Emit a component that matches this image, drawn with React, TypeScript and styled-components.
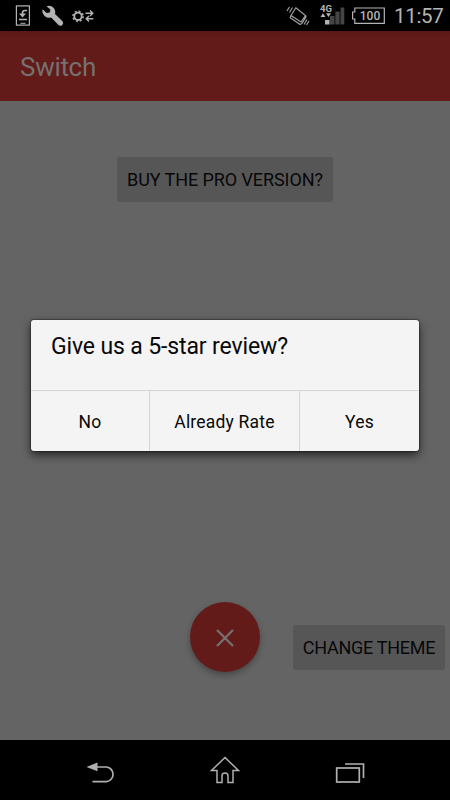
import React from "react";
import styled, { createGlobalStyle } from "styled-components";

const GlobalStyle = createGlobalStyle`
  * { box-sizing: border-box; }
  body { margin: 0; background: #000; font-family: Roboto, "Noto Sans", sans-serif; }
  button { font-family: inherit; border: 0; padding: 0; white-space: nowrap; }
  svg { display: block; flex: none; }
`;

const Screen = styled.div`
  position: relative;
  display: flex;
  flex-direction: column;
  width: 450px;
  height: 800px;
  overflow: hidden;
  background: #646464;
`;

const StatusBar = styled.header`
  flex: none;
  height: 31px;
  display: flex;
  justify-content: space-between;
  padding-right: 6px;
  background: #000;
  color: #b4b4b4;
`;

const Clock = styled.span`
  width: 50px;
  margin-left: 9px;
  font-size: 20.5px;
  line-height: 33px;
  letter-spacing: -0.3px;
  white-space: nowrap;
`;

const StatusGroup = styled.div`
  display: flex;
`;

const AppBar = styled.div`
  flex: none;
  height: 70px;
  padding: 1px 20px 0;
  display: flex;
  align-items: center;
  background: linear-gradient(#5a1816, #621b18 6px);
`;

const AppTitle = styled.h1`
  margin: 0;
  font-size: 26px;
  font-weight: 400;
  letter-spacing: -0.3px;
  color: #767170;
`;

const Content = styled.main`
  flex: 1;
  display: flex;
  flex-direction: column;
  justify-content: space-between;
  padding: 56px 5px 68px;
`;

const FlatButton = styled.button<{ $width: number; $tracking: number }>`
  width: ${(p) => p.$width}px;
  height: 45px;
  border-radius: 3px;
  background: #565656;
  color: #080808;
  font-size: 18px;
  letter-spacing: ${(p) => p.$tracking}px;
`;

const TopRow = styled.div`
  display: flex;
  justify-content: center;
`;

const BottomRow = styled.div`
  display: grid;
  grid-template-columns: 1fr 70px 1fr;
  align-items: end;
`;

const Fab = styled.button`
  grid-column: 2;
  width: 70px;
  height: 70px;
  padding-top: 1px;
  border-radius: 50%;
  display: flex;
  align-items: center;
  justify-content: center;
  background: #621b18;
  box-shadow: 0 3px 6px rgba(0, 0, 0, 0.3);
`;

const ThemeSlot = styled.div`
  justify-self: end;
  margin-bottom: 2px;
`;

const DialogLayer = styled.div`
  position: absolute;
  inset: 320px 31px auto;
`;

const Dialog = styled.section`
  height: 131px;
  display: flex;
  flex-direction: column;
  border-radius: 3px;
  overflow: hidden;
  background: #f4f4f4;
  color: #080808;
  box-shadow: 0 0 1px 1px rgba(0, 0, 0, 0.3), 0 4px 10px rgba(0, 0, 0, 0.65);
`;

const DialogTitle = styled.h2`
  flex: 1;
  margin: 0;
  padding: 12px 20px 0;
  font-size: 23px;
  line-height: 30px;
  font-weight: 400;
  letter-spacing: -0.13px;
`;

const Actions = styled.div`
  height: 61px;
  display: grid;
  grid-template-columns: 118px 150px 1fr;
  border-top: 1px solid #d6d6d6;
`;

const Action = styled.button`
  padding-top: 2px;
  background: none;
  color: #080808;
  font-size: 17.5px;
  letter-spacing: 0.2px;
  & + & { border-left: 1px solid #d6d6d6; }
`;

const NavBar = styled.nav`
  flex: none;
  height: 60px;
  background: #000;
  display: flex;
  justify-content: center;
`;

const LeftStatusIcons = () => (
  <svg width="110" height="31" viewBox="0 0 110 31" fill="none" stroke="#b4b4b4">
    <rect x="16.4" y="5.9" width="13" height="19.2" strokeWidth="1.2" />
    <path d="M20.500 23.300h5" strokeWidth="1" />
    <path d="M19 19.500h8M27 10.500h-2q-2.500 0-2.500 2.500v3" strokeWidth="1.6" />
    <path d="M19 13.500h7l-3.500 4z" fill="#b4b4b4" stroke="none" />
    <path
      fill="#b4b4b4"
      stroke="none"
      d="M46.500 6.200q4-1.500 7 1.500 2.500 2.800 1.500 6.300l7.500 7.200q1.500 2-.2 3.700t-3.800.2l-7.400-7.600q-3.600 1-6.500-1.600-3-3-2-6.600l4 3.700 3.200-.600.600-3z"
    />
    <circle cx="78" cy="16.300" r="3.700" strokeWidth="1.8" />
    <circle cx="78" cy="16.300" r="5.100" strokeWidth="1.5" strokeDasharray="2 2.006" />
    <path d="M85.500 13.200h7M90 10.500l2.800 2.700-2.800 2.700M93.300 18.700h-7M89 16l-2.800 2.700 2.800 2.700" strokeWidth="1.400" />
  </svg>
);

const VibrateIcon = () => (
  <svg width="24" height="31" viewBox="286 0 24 31" fill="none" stroke="#a0a0a0" strokeWidth="1.2">
    <path d="M295.800 7.800l9.700 7.700-4.500 6.500-10-6.500zM291 15.500l-.8 2.300 10 6.800 1.800-1.200 4-6.500-.5-1.400" />
    <path d="M287 11l2.500-4M289.500 12.500l3-5M304 24.500l3-5M306.500 25l2.500-4" strokeWidth="1.200" />
  </svg>
);

const NetworkLabel = styled.span`
  height: 9px;
  font-size: 9.5px;
  line-height: 9px;
  font-weight: 700;
  color: #b4b4b4;
`;

const Network = styled.div`
  width: 26px;
  margin: 4px 6px 0 10px;
  display: flex;
  flex-direction: column;
`;

const SignalHolder = styled.div`
  margin-top: -9px;
`;

const SignalIcon = () => (
  <svg width="26" height="21" viewBox="320 4 26 21">
    <path d="M320.500 17l2.500-3.800 2.500 3.800zM326 13.300h5l-2.500 3.800z" fill="#b4b4b4" />
    <path d="M325 20h4.500v4.500H325z" fill="#b4b4b4" />
    <path d="M330 16h4.500v8.500H330zM335.300 11.500h4.300v13h-4.300zM340.500 7.500h3.800v17h-3.800z" fill="#454545" />
  </svg>
);

const Battery = styled.div`
  width: 33px;
  height: 31px;
  display: grid;
  > * { grid-area: 1 / 1; }
`;

const BatteryText = styled.span`
  font-size: 12px;
  font-weight: 500;
  line-height: 33px;
  text-align: center;
  padding-left: 3px;
`;

const BatteryIcon = () => (
  <svg width="33" height="31" viewBox="352 0 33 31" fill="none" stroke="#b4b4b4" strokeWidth="1.2">
    <path d="M354.800 8h29.500v15.400h-29.500v-4.400h-2.200v-7h2.200z" />
  </svg>
);

const NavIcons = () => (
  <svg width="450" height="60" viewBox="0 740 450 60" fill="none" stroke="#b0b0b0" strokeWidth="1.7">
    <path d="M97 767h9.500a7.400 7.400 0 0 1 0 14.700H92.500" />
    <path d="M86.500 767l11-4.500v8.700z" fill="#b0b0b0" stroke="none" />
    <path d="M225 757.500l-13.500 13h5.500v12h5v-6.500q0-3 3-3t3 3v6.500h5v-12h5.500z" strokeWidth="1.5" />
    <rect x="336.700" y="768" width="22.600" height="14" />
    <path d="M345 764h18.500v14" />
  </svg>
);

export default function App() {
  return (
    <>
      <GlobalStyle />
      <Screen>
        <StatusBar>
          <LeftStatusIcons />
          <StatusGroup>
            <VibrateIcon />
            <Network>
              <NetworkLabel>4G</NetworkLabel>
              <SignalHolder>
                <SignalIcon />
              </SignalHolder>
            </Network>
            <Battery>
              <BatteryIcon />
              <BatteryText>100</BatteryText>
            </Battery>
            <Clock>11:57</Clock>
          </StatusGroup>
        </StatusBar>
        <AppBar>
          <AppTitle>Switch</AppTitle>
        </AppBar>
        <Content>
          <TopRow>
            <FlatButton $width={216} $tracking={-0.08}>BUY THE PRO VERSION?</FlatButton>
          </TopRow>
          <BottomRow>
            <Fab aria-label="Close">
              <svg width="18" height="18" viewBox="0 0 18 18" stroke="#777272" strokeWidth="2.2">
                <path d="M1 1l16 16M17 1L1 17" />
              </svg>
            </Fab>
            <ThemeSlot>
              <FlatButton $width={152} $tracking={-0.28}>CHANGE THEME</FlatButton>
            </ThemeSlot>
          </BottomRow>
        </Content>
        <NavBar>
          <NavIcons />
        </NavBar>
        <DialogLayer>
          <Dialog role="dialog">
            <DialogTitle>Give us a 5-star review?</DialogTitle>
            <Actions>
              <Action>No</Action>
              <Action>Already Rate</Action>
              <Action>Yes</Action>
            </Actions>
          </Dialog>
        </DialogLayer>
      </Screen>
    </>
  );
}
